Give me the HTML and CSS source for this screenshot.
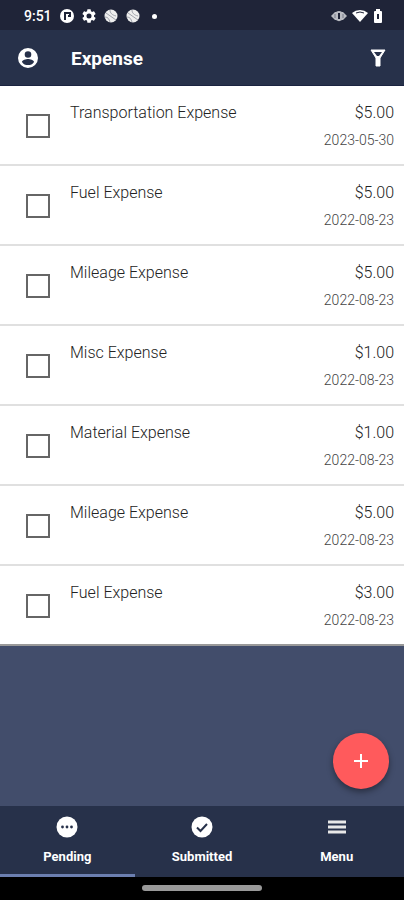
FILE: index.html
```
<!DOCTYPE html>
<html lang="en">
  <head>
    <meta charset="UTF-8" />
    <meta name="viewport" content="width=device-width, initial-scale=1.0" />
    <title>Expense</title>
    <link rel="stylesheet" href="styles.css">
  </head>
  <body>
    <div class="status-bar">
      <span class="clock">9:51</span>
      <svg class="status-icon" viewBox="0 0 14 14">
        <circle cx="7" cy="7" r="7" fill="#fff" />
        <path d="M5 11V4h5v3H8" fill="none" stroke="#1f2438" stroke-width="2" />
      </svg>
      <svg class="status-icon" viewBox="2 2 20 20">
        <path fill="#fff" fill-rule="evenodd" d="M19.14 12.94a7 7 0 0 0 0-1.88l2.03-1.58a.5.5 0 0 0 .12-.61l-1.92-3.32a.5.5 0 0 0-.59-.22l-2.39.96a7 7 0 0 0-1.62-.94l-.36-2.54a.5.5 0 0 0-.48-.41h-3.84a.5.5 0 0 0-.47.41l-.36 2.54a7 7 0 0 0-1.62.94l-2.39-.96a.5.5 0 0 0-.59.22L2.74 8.87a.5.5 0 0 0 .12.61l2.03 1.58a7 7 0 0 0 0 1.88l-2.03 1.58a.5.5 0 0 0-.12.61l1.92 3.32c.12.22.37.29.59.22l2.39-.96c.5.38 1.03.7 1.62.94l.36 2.54c.05.24.24.41.48.41h3.84c.24 0 .44-.17.47-.41l.36-2.54a7 7 0 0 0 1.62-.94l2.39.96c.22.08.47 0 .59-.22l1.92-3.32a.5.5 0 0 0-.12-.61zM12 15.600a3.600 3.600 0 1 1 0-7.200 3.600 3.600 0 0 1 0 7.200z" />
      </svg>
      <svg class="status-icon" viewBox="0 0 14 14">
        <circle cx="7" cy="7" r="6.5" fill="#eee" />
        <path d="M2 4l10 7M6 1c0 3 2 5 6 6M1 8c3 0 4 2 5 5" fill="none" stroke="#a0a3ac" />
      </svg>
      <svg class="status-icon" viewBox="0 0 14 14">
        <circle cx="7" cy="7" r="6.5" fill="#eee" />
        <path d="M2 4l10 7M6 1c0 3 2 5 6 6M1 8c3 0 4 2 5 5" fill="none" stroke="#a0a3ac" />
      </svg>
      <span class="dot"></span>
      <span class="system-icons">
        <svg width="16" height="14" viewBox="0 0 16 14">
          <path d="M0 7l4-4h1a5 5 0 0 1 6 0h1l4 4-4 4h-1a5 5 0 0 1-6 0H4z" fill="#b9bbc2" />
          <path d="M8 4v6" stroke="#1f2438" stroke-width="2" />
          <path d="M4 5v4M12 5v4" stroke="#777b88" />
        </svg>
        <svg width="16" height="14" viewBox="0 0 16 14">
          <path d="M0 4a12 12 0 0 1 16 0L8 13z" fill="#fff" />
          <path d="M4 4q4-2 8 0" fill="none" stroke="#1f2438" />
        </svg>
        <svg width="10" height="14" viewBox="0 0 10 14">
          <path d="M3 0h4v2h1q1 0 1 1v10q0 1-1 1H2q-1 0-1-1V3q0-1 1-1h1z" fill="#fff" />
          <path d="M5 5v5" stroke="#1f2438" stroke-width="2" />
        </svg>
      </span>
    </div>

    <header class="toolbar">
      <button class="icon-button" aria-label="Account">
        <svg width="20" height="20" viewBox="2 2 20 20">
          <path fill="#fff" fill-rule="evenodd" d="M12 2a10 10 0 1 0 0 20 10 10 0 0 0 0-20zm0 3.2a3.3 3.3 0 1 1 0 6.6 3.3 3.3 0 0 1 0-6.6zm0 13.9a7.2 7.2 0 0 1-6-3.2c0-2 4-3 6-3s6 1 6 3a7.2 7.2 0 0 1-6 3.2z" />
        </svg>
      </button>
      <h1>Expense</h1>
      <button class="icon-button" aria-label="Filter">
        <svg width="16" height="18" viewBox="0 0 16 18">
          <path d="M1 1h14L10 9v8H6V9z" fill="#fff" stroke="#fff" stroke-linejoin="round" />
          <path d="M4 3h8L9 7H7z" fill="#27314a" />
        </svg>
      </button>
    </header>

    <main>
      <ul class="expense-list">
        <li>
          <input type="checkbox" id="expense-1" />
          <label for="expense-1">Transportation Expense</label>
          <div class="amount">$5.00<span class="date">2023-05-30</span></div>
        </li>
        <li>
          <input type="checkbox" id="expense-2" />
          <label for="expense-2">Fuel Expense</label>
          <div class="amount">$5.00<span class="date">2022-08-23</span></div>
        </li>
        <li>
          <input type="checkbox" id="expense-3" />
          <label for="expense-3">Mileage Expense</label>
          <div class="amount">$5.00<span class="date">2022-08-23</span></div>
        </li>
        <li>
          <input type="checkbox" id="expense-4" />
          <label for="expense-4">Misc Expense</label>
          <div class="amount">$1.00<span class="date">2022-08-23</span></div>
        </li>
        <li>
          <input type="checkbox" id="expense-5" />
          <label for="expense-5">Material Expense</label>
          <div class="amount">$1.00<span class="date">2022-08-23</span></div>
        </li>
        <li>
          <input type="checkbox" id="expense-6" />
          <label for="expense-6">Mileage Expense</label>
          <div class="amount">$5.00<span class="date">2022-08-23</span></div>
        </li>
        <li>
          <input type="checkbox" id="expense-7" />
          <label for="expense-7">Fuel Expense</label>
          <div class="amount">$3.00<span class="date">2022-08-23</span></div>
        </li>
      </ul>
      <button class="add-button" aria-label="Add expense">
        <svg width="16" height="16" viewBox="0 0 16 16">
          <path d="M8 1v14M1 8h14" stroke="#fff" stroke-width="2" />
        </svg>
      </button>
    </main>

    <nav class="tabs">
      <a href="#pending" class="active">
        <svg width="22" height="22" viewBox="0 0 22 22">
          <circle cx="11" cy="11" r="10.5" fill="#fff" />
          <g fill="#27314a">
            <circle cx="6.5" cy="11" r="1.4" />
            <circle cx="11" cy="11" r="1.4" />
            <circle cx="15.5" cy="11" r="1.4" />
          </g>
        </svg>
        Pending
      </a>
      <a href="#submitted">
        <svg width="22" height="22" viewBox="0 0 22 22">
          <circle cx="11" cy="11" r="10.5" fill="#fff" />
          <path d="M6 11.5l3.5 3.5L16 8" fill="none" stroke="#27314a" stroke-width="2" />
        </svg>
        Submitted
      </a>
      <a href="#menu">
        <svg width="22" height="22" viewBox="0 0 22 22">
          <path d="M2 6h18M2 11h18M2 16h18" stroke="#e8e8e8" stroke-width="3" />
        </svg>
        Menu
      </a>
    </nav>
    <div class="gesture-bar"><span></span></div>
  </body>
</html>
```
FILE: styles.css
```
* {
  box-sizing: border-box;
}
body {
  margin: 0;
  min-height: 100vh;
  display: flex;
  flex-direction: column;
  font-family: Roboto, sans-serif;
  background-color: #424d6b;
}
button {
  border: 0;
  padding: 0;
  cursor: pointer;
}
svg {
  display: block;
}
.status-bar {
  display: flex;
  align-items: center;
  gap: 8px;
  height: 30px;
  padding: 2px 21px 0 24px;
  background-color: #1f2438;
  color: #fff;
}
.clock {
  font-size: 14px;
  font-weight: 500;
}
.status-icon {
  width: 14px;
  height: 14px;
}
.dot {
  width: 5px;
  height: 5px;
  margin-left: 4px;
  border-radius: 50%;
  background-color: #fff;
}
.system-icons {
  display: flex;
  gap: 5px;
  margin-left: auto;
}
.toolbar {
  display: flex;
  align-items: center;
  height: 56px;
  padding: 1px 16px 0;
  background-color: #27314a;
  border-bottom: 1px solid #1a2340;
  color: #fff;
}
.toolbar h1 {
  flex: 1;
  margin: 0 0 0 31px;
  font-size: 19px;
  font-weight: 700;
}
.icon-button {
  display: flex;
  justify-content: center;
  min-width: 20px;
  background: none;
}
.toolbar .icon-button:first-child {
  width: 24px;
}
main {
  flex: 1;
  position: relative;
}
.expense-list {
  margin: 0;
  padding: 0;
  list-style: none;
}
.expense-list li {
  display: flex;
  align-items: flex-start;
  height: 80px;
  padding: 17px 10px 0 26px;
  background-color: #fff;
  border-bottom: 2px solid #e0e0e0;
  color: #222;
  font-size: 16px;
  font-weight: 300;
  line-height: 20px;
}
.expense-list li:last-child {
  border-bottom-color: #999;
}
.expense-list input {
  appearance: none;
  width: 24px;
  height: 24px;
  margin: 11px 20px 0 0;
  border: 2px solid #666;
}
.expense-list input:checked {
  background-color: #666;
}
.expense-list label {
  flex: 1;
}
.amount {
  text-align: right;
}
.date {
  display: block;
  margin-top: 7px;
  color: #444;
  font-size: 14px;
}
.add-button {
  position: absolute;
  right: 15px;
  bottom: 17px;
  display: flex;
  align-items: center;
  justify-content: center;
  width: 56px;
  height: 56px;
  border-radius: 50%;
  background-color: #ff5a5c;
  box-shadow: 0 3px 6px rgba(0, 0, 0, 0.4);
}
.tabs {
  display: flex;
  background-color: #27314a;
}
.tabs a {
  flex: 1;
  display: flex;
  flex-direction: column;
  align-items: center;
  gap: 11px;
  height: 71px;
  padding-top: 10px;
  border-bottom: 3px solid transparent;
  color: #fff;
  font-size: 13px;
  font-weight: 700;
  line-height: 16px;
  text-decoration: none;
}
.tabs .active {
  border-bottom-color: #6c7fb0;
}
.gesture-bar {
  display: flex;
  justify-content: center;
  height: 23px;
  padding-top: 8px;
  background-color: #000;
}
.gesture-bar span {
  width: 120px;
  height: 6px;
  border-radius: 3px;
  background-color: #999;
}
```
